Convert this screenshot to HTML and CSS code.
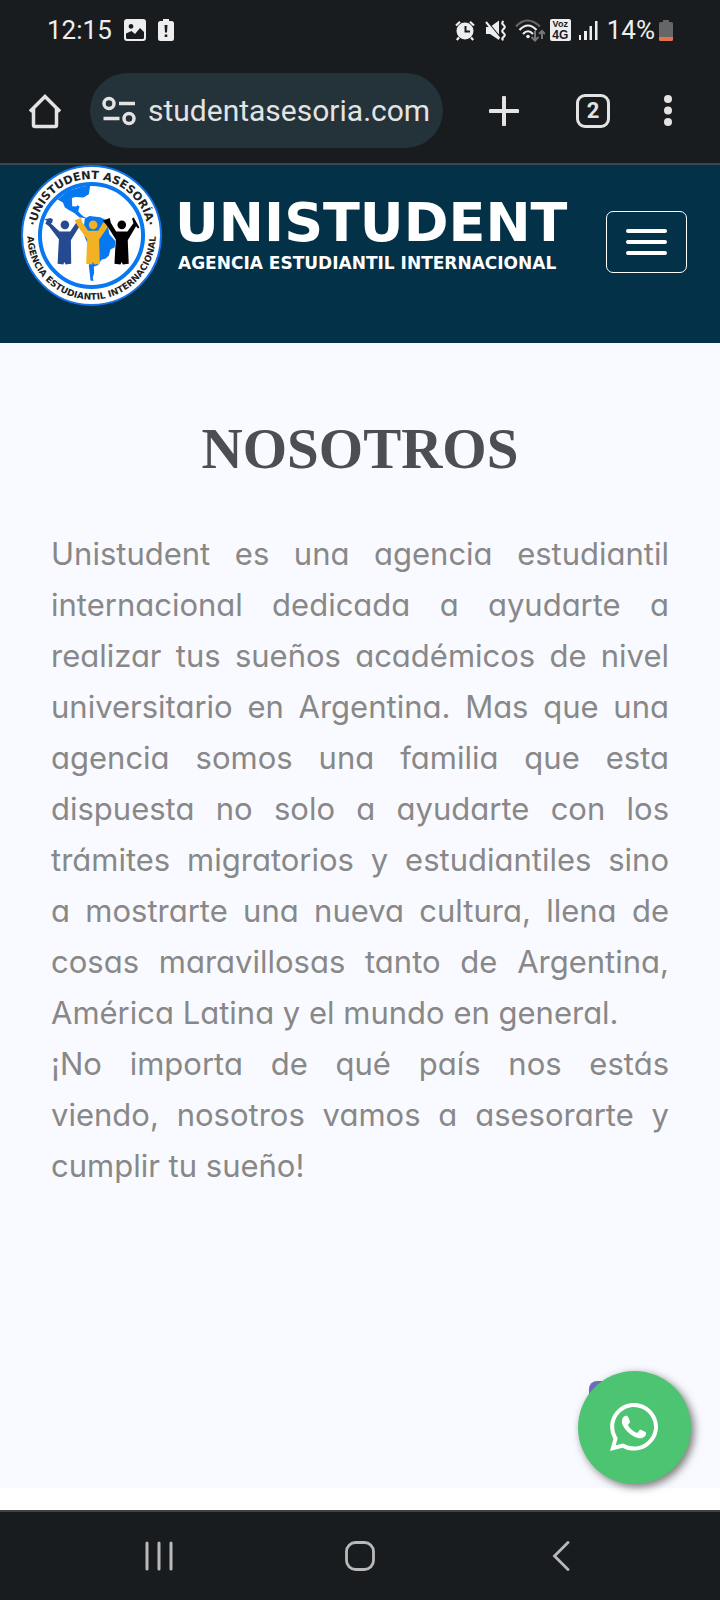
FILE: index.html
```html
<!DOCTYPE html>
<html lang="es">
<head>
<meta charset="utf-8">
<meta name="viewport" content="width=device-width, initial-scale=1">
<title>Unistudent</title>
<link rel="stylesheet" href="styles.css">
</head>
<body>
<div class="status">
  <span class="clock">12:15</span>
  <svg class="ic-image" width="22" height="22" viewBox="0 0 22 22"><path fill="#eee" fill-rule="evenodd" d="M3 0h16a3 3 0 0 1 3 3v16a3 3 0 0 1-3 3H3a3 3 0 0 1-3-3V3a3 3 0 0 1 3-3zM2 14.500V18.500a1.500 1.500 0 0 0 1.500 1.500h15a1.500 1.500 0 0 0 1.500-1.500V13l-4-4-5 6-3.500-3zM7 5a2.400 2.400 0 1 0 .01 0z"/></svg>
  <svg width="16" height="22" viewBox="0 0 16 22"><path fill="#eee" d="M5 0h6v2h2.500A2.500 2.500 0 0 1 16 4.500v15a2.500 2.500 0 0 1-2.500 2.500h-11A2.500 2.500 0 0 1 0 19.500v-15A2.500 2.500 0 0 1 2.500 2H5z"/><path fill="#191c1f" d="M6.500 6h3l-.5 7.500H7zM6.700 15.500h2.600v2.500H6.700z"/></svg>
  <span class="spacer"></span>
  <svg width="20" height="21" viewBox="0 0 20 21"><circle cx="10" cy="11" r="8.500" fill="#eee"/><path d="M1 5.500 5 1.800M19 5.500 15 1.800M4 17.500 1.800 20M16 17.500l2.200 2.500" stroke="#eee" stroke-width="2.200" fill="none"/><path d="M10.500 6v5.500H15" stroke="#191c1f" stroke-width="2" fill="none"/></svg>
  <svg class="ic-mute" width="21" height="21" viewBox="0 0 21 21"><path fill="#eee" d="M1 7h4l9-6.500v19.500L5 14H1z"/><path d="m1 .5 14 17" stroke="#191c1f" stroke-width="2"/><path d="m1 2 13.500 16.500" stroke="#eee" stroke-width="2"/><path d="M18.500 1q-2.500 2 0 4t0 4 0 4 0 4 0 3" stroke="#eee" stroke-width="2.200" fill="none"/></svg>
  <svg class="ic-wifi" width="30" height="23" viewBox="0 0 30 23"><g fill="none" stroke-width="2.200"><path stroke="#666" d="M1 7.500q11-12 24 0"/><path stroke="#eee" d="M4.500 11q8.500-9 17 0M8 15q5-5.500 10 0"/><path stroke="#777" stroke-width="2" d="M20 12v9M16.500 18l3.500 3.500 3.500-3.500M27 20v-8M24 15l3-3 3 3"/></g><circle cx="13" cy="17.500" r="1.800" fill="#eee"/></svg>
  <span class="volte"><span>Voz</span><span>4G</span></span>
  <svg class="ic-signal" width="19" height="20" viewBox="0 0 19 20"><path fill="#eee" d="M0 15h2v5H0zM5 11h3v9H5zM10.500 6h2.500v14h-2.500zM16 1h2.500v19H16z"/></svg>
  <span class="percent">14%</span>
  <svg class="ic-batt" width="14" height="21" viewBox="0 0 14 21"><path fill="#666" d="M4 0h6v2h2.500A1.500 1.500 0 0 1 14 3.500V17H0V3.500A1.500 1.500 0 0 1 1.500 2H4z"/><path fill="#e2734d" d="M0 17h14v2.500a1.500 1.500 0 0 1-1.500 1.500h-11A1.500 1.500 0 0 1 0 19.500z"/></svg>
</div>
<div class="toolbar">
  <button class="plain home" aria-label="Inicio"><svg width="34" height="36" viewBox="0 0 34 36"><path d="M2 18.500 17 3.500l15 15M5.500 15.500V32a1.500 1.500 0 0 0 1.500 1.500h20a1.500 1.500 0 0 0 1.500-1.500V15.500" fill="none" stroke="#e3e3e3" stroke-width="3.500"/></svg></button>
  <label class="address">
    <svg width="34" height="30" viewBox="0 0 34 30"><g fill="none" stroke="#e3e3e3" stroke-width="3.500"><circle cx="7" cy="7.500" r="5"/><path d="M17 7.500h16M1.500 22.500h16"/><circle cx="27" cy="22.500" r="5"/></g></svg>
    <input class="url" type="text" value="studentasesoria.com" aria-label="Dirección">
  </label>
  <button class="plain plus" aria-label="Nueva pestaña"><svg width="30" height="30" viewBox="0 0 30 30"><path d="M15 1.500v27M1.500 15h27" stroke="#e3e3e3" stroke-width="4" stroke-linecap="round"/></svg></button>
  <button class="plain tabs" aria-label="Pestañas">2</button>
  <button class="plain dots" aria-label="Menú"><svg width="8" height="31" viewBox="0 0 8 31"><g fill="#e3e3e3"><circle cx="4" cy="4" r="4"/><circle cx="4" cy="15.500" r="4"/><circle cx="4" cy="27" r="4"/></g></svg></button>
</div>
<header class="site-header">
  <a class="brand" href="#">
    <svg class="seal" width="141" height="141" viewBox="64 42 424 424">
      <defs>
        <path id="arc-top" d="M106 254a170 170 0 0 1 340 0"/>
        <path id="arc-bottom" d="M83 254a193 193 0 0 0 386 0"/>
      </defs>
      <circle cx="276" cy="254" r="209" fill="#fff" stroke="#1473e6" stroke-width="6"/>
      <circle cx="276" cy="254" r="155" fill="#fff" stroke="#0878f0" stroke-width="12"/>
      <path fill="#0878f0" d="M174 146 205 120 244 108 272 104 268 130 252 140 228 138 217 141 218 166 230 167 234 163 240 167 236 181 244 190 252 197 262 202 240 200 224 186 209 178 196 170 190 155z"/>
      <path fill="#0878f0" d="M256 203 270 195 302 199 322 208 330 250 347 270 346 289 333 296 328 315 318 324 307 326 300 335 296 343 283 348 284 366 280 380 282 391 273 389 271 371 268 344 274 320 270 290 256 260 252 235z"/>
      <g id="grads">
        <g fill="#254a91"><circle cx="196" cy="222" r="13"/><path d="M142 210 134 206 152 201 160 205 158 215 154 218 180 242 212 242 230 216 238 210 240 226 214 268 215 339 198 341 195 334 191 341 174 339 178 265 148 226 137 218z"/></g>
        <g fill="#f2b223"><circle cx="281" cy="222" r="13"/><path d="M225 208 244 201 248 214 266 240 296 240 312 214 326 214 324 229 299 266 301 339 284 341 281 334 277 341 260 339 263 266 235 226z"/></g>
        <g fill="#000"><circle cx="367" cy="222" r="13"/><path d="M310 210 331 201 334 216 350 242 384 242 402 217 398 203 403 200 420 230 416 233 410 226 385 268 388 339 370 341 367 334 363 341 345 339 349 266 324 226z"/></g>
      </g>
      <text class="seal-top"><textPath href="#arc-top" startOffset="50%" text-anchor="middle">·UNISTUDENT ASESORÍA·</textPath></text>
      <text class="seal-bottom"><textPath href="#arc-bottom" startOffset="50%" text-anchor="middle">AGENCIA ESTUDIANTIL INTERNACIONAL</textPath></text>
    </svg>
    <span class="brand-text"><span class="brand-name">UNISTUDENT</span><span class="brand-sub">AGENCIA ESTUDIANTIL INTERNACIONAL</span></span>
  </a>
  <button class="menu" aria-label="Abrir menú"><span></span><span></span><span></span></button>
</header>
<main class="about">
  <h1>NOSOTROS</h1>
  <p>
    <span>Unistudent es una agencia estudiantil</span>
    <span>internacional dedicada a ayudarte a</span>
    <span>realizar tus sueños académicos de nivel</span>
    <span>universitario en Argentina. Mas que una</span>
    <span>agencia somos una familia que esta</span>
    <span>dispuesta no solo a ayudarte con los</span>
    <span>trámites migratorios y estudiantiles sino</span>
    <span>a mostrarte una nueva cultura, llena de</span>
    <span>cosas maravillosas tanto de Argentina,</span>
    <span class="end">América Latina y el mundo en general.</span>
    <span>¡No importa de qué país nos estás</span>
    <span>viendo, nosotros vamos a asesorarte y</span>
    <span class="end">cumplir tu sueño!</span>
  </p>
  <span class="back-top"></span>
  <a class="whatsapp" href="#" aria-label="WhatsApp"><svg width="48" height="48" viewBox="0 0 448 448"><path fill="#fff" d="M380.900 65.100C339 23.100 283.200 0 223.900 0 101.500 0 1.900 99.600 1.900 222c0 39.100 10.200 77.300 29.600 111L0 448l117.700-30.900c32.400 17.700 68.900 27 106.100 27h.1c122.300 0 224.100-99.600 224.100-222 0-59.300-25.200-115-67.100-157zM223.900 406.700c-33.200 0-65.700-8.900-94-25.700l-6.700-4-69.800 18.300L72 327.200l-4.400-7c-18.500-29.400-28.200-63.300-28.200-98.200 0-101.700 82.800-184.500 184.600-184.500 49.300 0 95.600 19.200 130.400 54.100 34.800 34.900 56.200 81.200 56.100 130.500 0 101.800-84.900 184.600-186.600 184.600zm101.200-138.200c-5.500-2.800-32.800-16.200-37.900-18-5.100-1.900-8.800-2.800-12.500 2.800-3.700 5.600-14.300 18-17.600 21.800-3.200 3.700-6.500 4.200-12 1.400-32.600-16.300-54-29.100-75.500-66-5.700-9.800 5.700-9.100 16.300-30.300 1.800-3.700.9-6.900-.5-9.700-1.400-2.800-12.500-30.100-17.100-41.200-4.500-10.800-9.100-9.300-12.500-9.500-3.200-.2-6.900-.2-10.600-.2-3.700 0-9.700 1.400-14.800 6.900-5.100 5.600-19.400 19-19.400 46.300 0 27.300 19.900 53.700 22.600 57.400 2.800 3.700 39.100 59.700 94.800 83.800 35.200 15.200 49 16.500 66.600 13.900 10.700-1.600 32.800-13.400 37.400-26.400 4.600-13 4.600-24.100 3.200-26.400-1.300-2.500-5-3.900-10.500-6.600z"/></svg></a>
</main>
<div class="strip"></div>
<nav class="sysnav">
  <button class="plain" aria-label="Recientes"><svg width="28" height="30" viewBox="0 0 28 30"><path d="M2 2v26M14 2v26M26 2v26" stroke="#b9b9b9" stroke-width="3" stroke-linecap="round"/></svg></button>
  <button class="plain" aria-label="Pantalla de inicio"><svg width="30" height="30" viewBox="0 0 30 30"><rect x="1.500" y="1.500" width="27" height="27" rx="9" fill="none" stroke="#b9b9b9" stroke-width="2.800"/></svg></button>
  <button class="plain" aria-label="Atrás"><svg width="18" height="30" viewBox="0 0 18 30"><path d="M16 1.500 2.500 15 16 28.500" fill="none" stroke="#b9b9b9" stroke-width="2.800" stroke-linecap="round"/></svg></button>
</nav>
</body>
</html>
```

FILE: styles.css
```css
* { box-sizing: border-box; }
body {
  margin: 0;
  min-height: 100vh;
  display: flex;
  flex-direction: column;
  background: #fff;
  font-family: Inter, "Open Sans", sans-serif;
}
svg { display: block; flex: none; }
.plain {
  border: 0;
  padding: 0;
  background: none;
  color: #e3e3e3;
}
.status {
  height: 60px;
  padding: 0 47px 0 47px;
  display: flex;
  align-items: center;
  background: #191c1f;
  color: #eee;
  font: 26px/30px Roboto, sans-serif;
}
.ic-image { margin: 0 12px 0 12px; }
.spacer { flex: 1; }
.ic-mute { margin-left: 10px; }
.ic-wifi { margin-left: 9px; }
.volte {
  width: 21px;
  height: 22px;
  margin-left: 5px;
  display: flex;
  flex-direction: column;
  align-items: center;
  border-radius: 2px;
  background: #eee;
  color: #191c1f;
  font: bold 9px/10px "Liberation Sans", sans-serif;
}
.volte span + span { font-size: 12px; line-height: 12px; }
.ic-signal { margin: 0 9px 0 8px; }
.ic-batt { margin-left: 4px; }
.toolbar {
  height: 105px;
  padding: 13px 48px 15px 28px;
  display: flex;
  align-items: flex-start;
  background: #191c1f;
  border-bottom: 2px solid #3d484e;
}
.toolbar .plain { height: 75px; display: flex; align-items: center; }
.address {
  flex: 1;
  min-width: 0;
  height: 75px;
  margin: 0 46px 0 28px;
  padding: 0 8px 0 12px;
  display: flex;
  align-items: center;
  gap: 12px;
  border-radius: 38px;
  background: #243239;
}
.url {
  flex: 1;
  min-width: 0;
  padding: 0;
  border: 0;
  background: none;
  color: #e3e3e3;
  font: 30px/36px Roboto, sans-serif;
}
.plus { margin-right: 57px; }
.toolbar .tabs {
  width: 34px;
  height: 34px;
  margin: 21px 54px 0 0;
  justify-content: center;
  border: 3px solid #e3e3e3;
  border-radius: 9px;
  font: bold 22px/26px Roboto, sans-serif;
}
.site-header {
  height: 178px;
  padding: 0 33px 0 21px;
  display: flex;
  align-items: flex-start;
  justify-content: space-between;
  background: #033148;
}
.brand {
  display: flex;
  gap: 13px;
  color: #fff;
  text-decoration: none;
  font-family: "DejaVu Sans", sans-serif;
  font-weight: bold;
  white-space: nowrap;
}
.brand-text { padding-top: 28px; display: flex; flex-direction: column; }
.brand-name { font-size: 54px; line-height: 60px; }
.brand-sub { font-size: 17px; line-height: 20px; padding-left: 3px; }
.seal-top, .seal-bottom { fill: #222; font-family: "DejaVu Sans", sans-serif; font-weight: bold; }
.seal-top { font-size: 34px; }
.seal-bottom { font-size: 27px; }
.menu {
  width: 81px;
  height: 62px;
  margin-top: 46px;
  padding: 0 19px;
  display: flex;
  flex-direction: column;
  justify-content: center;
  gap: 7px;
  border: 1px solid #fff;
  border-radius: 7px;
  background: none;
}
.menu span { height: 4px; border-radius: 2px; background: #fff; }
.about {
  position: relative;
  flex: 1;
  padding: 72px 51px 0;
  background: #f9faff;
}
h1 {
  margin: 0;
  color: #4d4e53;
  text-align: center;
  font: bold 57px/68px "Liberation Serif", serif;
}
p {
  margin: 45px 0 0;
  color: #888;
  font-size: 31px;
  line-height: 51px;
  font-feature-settings: "cv11";
}
p span { display: block; text-align: justify; text-align-last: justify; }
p .end { text-align-last: left; }
.whatsapp {
  position: absolute;
  right: 29px;
  bottom: 4px;
  width: 113px;
  height: 113px;
  padding: 0 2px 2px 0;
  display: flex;
  align-items: center;
  justify-content: center;
  border-radius: 50%;
  background: #4dc471;
  box-shadow: 3px 3px 8px #777;
}
.back-top {
  position: absolute;
  right: 107px;
  bottom: 83px;
  width: 24px;
  height: 24px;
  border-radius: 8px;
  background: #6d6bc4;
}
.strip { height: 22px; }
.sysnav {
  height: 90px;
  padding: 0 143px;
  display: flex;
  align-items: center;
  justify-content: space-between;
  border-top: 2px solid #3d4246;
  background: #191c1f;
}
.sysnav .plain { width: 32px; display: flex; justify-content: center; }
```
